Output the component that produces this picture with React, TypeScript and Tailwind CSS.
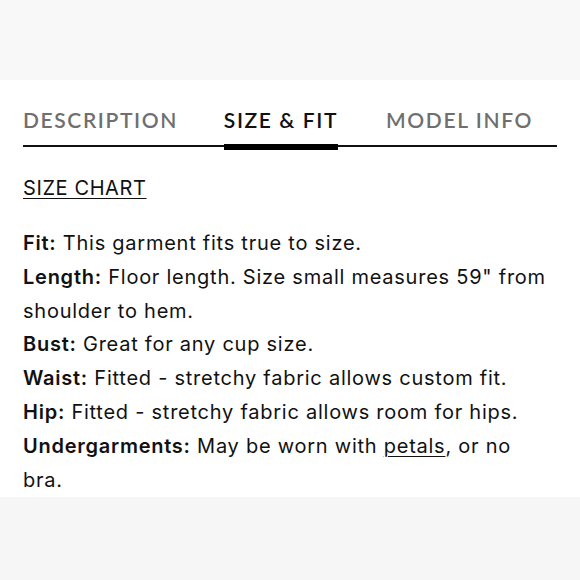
export default function App() {
  const rows: { label: string; text: React.ReactNode }[] = [
    { label: "Fit:", text: "This garment fits true to size." },
    { label: "Length:", text: 'Floor length. Size small measures 59" from shoulder to hem.' },
    { label: "Bust:", text: "Great for any cup size." },
    { label: "Waist:", text: "Fitted - stretchy fabric allows custom fit." },
    { label: "Hip:", text: "Fitted - stretchy fabric allows room for hips." },
    {
      label: "Undergarments:",
      text: (
        <>
          May be worn with <span className="underline underline-offset-[3px] decoration-1">petals</span>, or no bra.
        </>
      ),
    },
  ];

  return (
    <div className="w-[580px] h-[580px] bg-white flex flex-col text-[#111]">
      <div className="h-[80px] bg-[#f8f8f8] shrink-0" />

      <div className="flex-1 px-[23px]">
        {/* Tabs */}
        <div
          className="relative mt-[29px] border-b-[2px] border-[#111] w-[534px] flex justify-between pr-[24px] text-[21px] tracking-[1.6px] font-semibold leading-none pb-[15px]"
          style={{ fontFamily: "Lato, sans-serif" }}
        >
          <span className="text-[#6f6f6f]">DESCRIPTION</span>
          <span className="relative text-[#111] ml-[2px]">
            SIZE &amp; FIT
            <span className="absolute left-0 right-0 -bottom-[20px] h-[6px] bg-black" />
          </span>
          <span className="text-[#6f6f6f] ml-[4px]">MODEL INFO</span>
        </div>

        <div style={{ fontFamily: "Inter, sans-serif" }}>
          <div className="mt-[31px] text-[20px] leading-none">
            <span className="underline underline-offset-[3px] decoration-1 tracking-[0.6px]">SIZE CHART</span>
          </div>

          <div className="mt-[29px] text-[20px] leading-[33.8px] tracking-[0.75px] w-[534px]">
            {rows.map((r) => (
              <p key={r.label}>
                <span className="font-semibold">{r.label}</span> {r.text}
              </p>
            ))}
          </div>
        </div>
      </div>

      <div className="h-[83px] bg-[#f6f6f6] shrink-0" />
    </div>
  );
}
